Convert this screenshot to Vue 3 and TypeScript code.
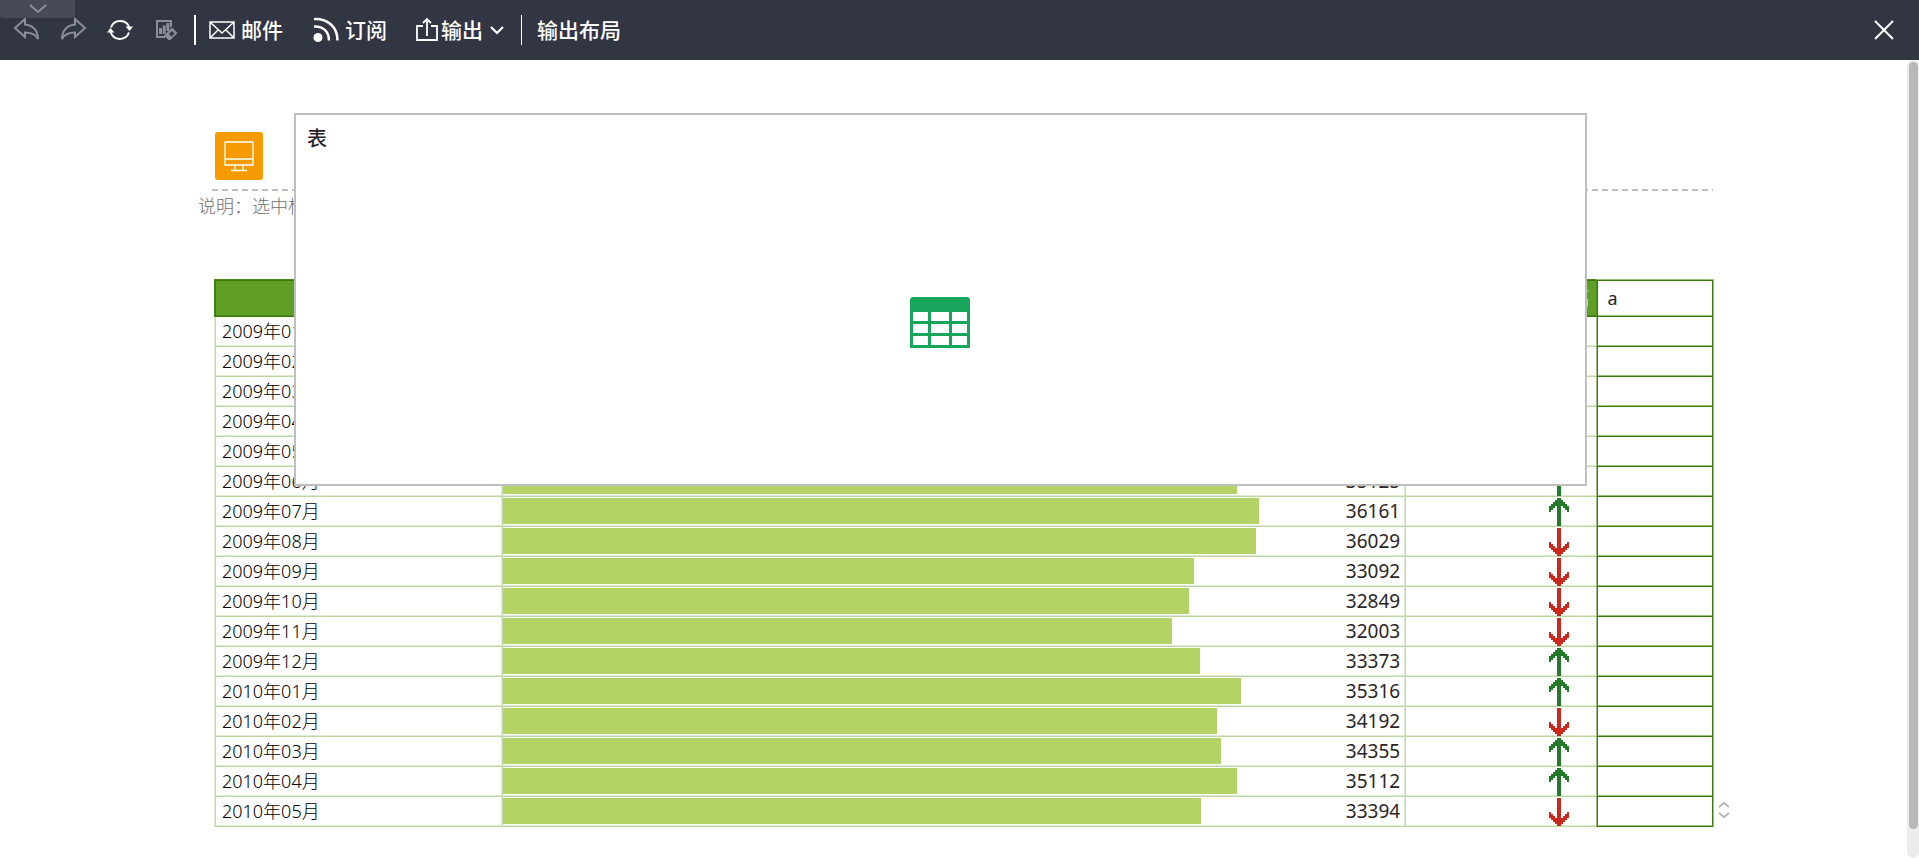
<script setup lang="ts">
interface Row {
  month: string
  value: number | null
  trend: 'up' | 'down' | null
}

const AXIS_MAX = 43130

const rows: Row[] = [
  { month: '2009年01月', value: null, trend: null },
  { month: '2009年02月', value: null, trend: null },
  { month: '2009年03月', value: null, trend: null },
  { month: '2009年04月', value: null, trend: null },
  { month: '2009年05月', value: null, trend: null },
  { month: '2009年06月', value: 35125, trend: 'up' },
  { month: '2009年07月', value: 36161, trend: 'up' },
  { month: '2009年08月', value: 36029, trend: 'down' },
  { month: '2009年09月', value: 33092, trend: 'down' },
  { month: '2009年10月', value: 32849, trend: 'down' },
  { month: '2009年11月', value: 32003, trend: 'down' },
  { month: '2009年12月', value: 33373, trend: 'up' },
  { month: '2010年01月', value: 35316, trend: 'up' },
  { month: '2010年02月', value: 34192, trend: 'down' },
  { month: '2010年03月', value: 34355, trend: 'up' },
  { month: '2010年04月', value: 35112, trend: 'up' },
  { month: '2010年05月', value: 33394, trend: 'down' },
]

const barWidth = (value: number): string => `${(value / AXIS_MAX) * 100}%`
</script>

<template>
  <div class="app">
    <header class="toolbar">
      <button class="fold" type="button" aria-label="收起">
        <svg width="18" height="10" viewBox="0 0 18 10"><path d="M1 1l8 7 8-7" fill="none" stroke="#8d8f98" stroke-width="2" /></svg>
      </button>
      <div class="tools">
        <button class="tool dim" type="button" aria-label="撤销">
          <svg width="28" height="28" viewBox="0 0 28 28"><path d="M2 12L12 3v5.500C20 9 25 15 25 23c-2-4-6-6.500-13-6.500V21z" /></svg>
        </button>
        <button class="tool dim" type="button" aria-label="重做">
          <svg width="28" height="28" viewBox="0 0 28 28"><path d="M25 12L15 3v5.500C7 9 2 15 2 23c2-4 6-6.500 13-6.500V21z" /></svg>
        </button>
        <button class="tool" type="button" aria-label="刷新">
          <svg width="28" height="28" viewBox="0 0 28 28">
            <path d="M4 11.500A9.700 9.700 0 0 1 22.500 12M22 16.500A9.700 9.700 0 0 1 3.600 16" />
            <path class="solid" d="M18.500 10.500H26l-3.400 4.500zM0 16.500l3.400-4.500L7.500 16.500z" />
          </svg>
        </button>
        <button class="tool dim" type="button" aria-label="编辑报表">
          <svg width="28" height="28" viewBox="0 0 28 28">
            <path d="M11 21H3V5h14v6" />
            <path class="solid" d="M5 12h3v6H5zM8.700 9.500h3V18h-3zM12.400 7h3v8h-3z" />
            <path class="solid" fill-rule="evenodd" d="M18 11.500l5.500 5.500-7 7h-2l-4.500-4.500zM18 15l-3 3 2.500 2.500 3-3z" />
          </svg>
        </button>
      </div>
      <span class="divider thick"></span>
      <button class="command" type="button">
        <svg width="26" height="28" viewBox="0 0 26 28"><path d="M1 6h24v16H1zM1.500 6.500L13 17 24.500 6.500M1.500 21.500l8-8M24.500 21.500l-8-8" stroke-width="1.500" /></svg>
        <span class="label">邮件</span>
      </button>
      <button class="command" type="button">
        <svg width="26" height="28" viewBox="0 0 26 28">
          <circle class="solid" cx="5" cy="21.500" r="4.500" />
          <path d="M1 10.500c9-.500 15 5 15 14M1 3c14-.500 23.500 8 23.500 21.500" stroke-width="2.500" />
        </svg>
        <span class="label">订阅</span>
      </button>
      <button class="command export" type="button">
        <svg width="22" height="28" viewBox="0 0 22 28"><path d="M7 10H1v14h20V10h-6M11 20V3M7 7l4-4 4 4" stroke-width="1.800" /></svg>
        <span class="label">输出</span>
        <svg class="caret" width="14" height="10" viewBox="0 0 14 10"><path d="M1 2l6 6 6-6" stroke-width="2.200" /></svg>
      </button>
      <span class="divider"></span>
      <button class="command" type="button"><span class="label">输出布局</span></button>
      <button class="close" type="button" aria-label="关闭">
        <svg width="22" height="22" viewBox="0 0 22 22"><path d="M2 2l18 18M20 2L2 20" stroke-width="2" /></svg>
      </button>
    </header>

    <main class="viewport">
      <div class="canvas">
        <div class="badge">
          <svg width="48" height="48" viewBox="0 0 48 48"><path d="M10 10h28v23H10zM10 27h28M20 33v5M28 33v5M16 38.500h16" fill="none" stroke="#fff" stroke-width="1.300" stroke-linejoin="round" /></svg>
        </div>
        <div class="rule"></div>
        <p class="note">说明：选中标</p>

        <div class="grid">
          <table>
            <colgroup>
              <col class="c-month" /><col class="c-bar" /><col class="c-trend" /><col class="c-extra" />
            </colgroup>
            <thead>
              <tr><th></th><th></th><th class="rate">增幅</th><th class="extra">a</th></tr>
            </thead>
            <tbody>
              <tr v-for="row in rows" :key="row.month">
                <td class="month">{{ row.month }}</td>
                <td class="measure">
                  <div v-if="row.value !== null" class="track">
                    <div class="bar" :style="{ width: barWidth(row.value) }"></div>
                    <span class="number">{{ row.value }}</span>
                  </div>
                </td>
                <td class="trend">
                  <svg v-if="row.trend" :class="row.trend" width="20" height="28" viewBox="0 0 10 14" shape-rendering="crispEdges">
                    <path d="M4 0h2v1h1v1h1v1h1v1h1v3H9V6H8V5H7V4H6v10H4V4H3v1H2v1H1v1H0V4h1V3h1V2h1V1h1z" />
                  </svg>
                </td>
                <td class="extra"></td>
              </tr>
            </tbody>
          </table>
          <div class="stepper">
            <svg width="12" height="18" viewBox="0 0 12 18"><path d="M1 6l5-4 5 4M1 12l5 4 5-4" fill="none" stroke="#b5b5b5" stroke-width="1.800" /></svg>
          </div>
        </div>

        <section class="panel">
          <h2>表</h2>
          <svg class="sheet" width="60" height="51" viewBox="0 0 60 51">
            <path fill="#16a55b" fill-rule="evenodd" d="M2 0h56l2 2v49H0V2zM3 15v9h15v-9zM21 15v9h18v-9zM42 15v9h15v-9zM3 27v9h15v-9zM21 27v9h18v-9zM42 27v9h15v-9zM3 39v9h15v-9zM21 39v9h18v-9zM42 39v9h15v-9z" />
          </svg>
        </section>
      </div>
      <div class="scrollbar"><div class="thumb"></div></div>
    </main>
  </div>
</template>

<style>
body {
  margin: 0;
  overflow: hidden;
}
</style>

<style scoped>
.app {
  display: flex;
  flex-direction: column;
  height: 100vh;
  background: #fff;
  color: #2b2526;
  font-family: "Noto Sans", "Noto Sans CJK SC", sans-serif;
}
button {
  padding: 0;
  border: 0;
  background: none;
  color: inherit;
  font: inherit;
}
svg {
  display: block;
}
.toolbar {
  position: relative;
  display: flex;
  align-items: center;
  flex: none;
  height: 60px;
  box-sizing: border-box;
  padding: 0 24px 0 13px;
  background: #323542;
  color: #fff;
  font-size: 21px;
  line-height: 28px;
  font-weight: 500;
  font-family: "Noto Sans CJK SC", sans-serif;
}
.toolbar svg {
  fill: none;
  stroke: currentColor;
  stroke-width: 2;
}
.toolbar .solid {
  fill: currentColor;
  stroke: none;
}
.fold {
  position: absolute;
  left: 0;
  top: 0;
  display: flex;
  justify-content: center;
  align-items: center;
  width: 75px;
  height: 18px;
  border-radius: 0 0 3px 3px;
  background: #484a57;
}
.tools {
  display: flex;
  gap: 19px;
}
.dim {
  color: #8b8d97;
}
.divider {
  width: 1px;
  height: 30px;
  margin: 0 15px 0 17px;
  background: #fff;
}
.divider.thick {
  width: 2px;
  margin: 0 13px 0 12px;
}
.command {
  display: flex;
  align-items: center;
  gap: 6px;
}
.label {
  padding-bottom: 3px;
}
.command + .command {
  margin-left: 30px;
}
.command + .export {
  margin-left: 29px;
}
.export {
  gap: 3px;
}
.caret {
  margin-left: 4px;
}
.close {
  margin-left: auto;
}
.viewport {
  display: flex;
  flex: 1;
  min-height: 0;
}
.canvas {
  position: relative;
  flex: 1;
  padding: 72px 194px 0 212px;
}
.badge {
  width: 48px;
  height: 48px;
  margin-left: 3px;
  border-radius: 3px;
  background: #f59a00;
}
.rule {
  height: 2px;
  margin-top: 9px;
  background: repeating-linear-gradient(90deg, #bfbfbf 0 6px, transparent 6px 10px);
}
.note {
  margin: 2px 0 0 -14px;
  color: #707070;
  font-size: 18px;
  line-height: 26px;
  font-weight: 300;
}
.grid {
  position: relative;
  margin: 60px -1px 0 2px;
}
table {
  width: 100%;
  table-layout: fixed;
  border-collapse: separate;
  border-spacing: 0;
  border-right: 1px solid #9dc181;
}
.c-month { width: 19.150%; }
.c-bar { width: 60.250%; }
.c-trend { width: 12.770%; }
th,
td {
  box-sizing: border-box;
  height: 30px;
  padding: 1px 0 2px 1px;
  border-left: 1px solid #dceccf;
  border-bottom: 1px solid #bdd7a3;
  box-shadow: inset 1px 0 #c3dbac, inset 0 -1px #dceccf;
  font-size: 18px;
  line-height: 26px;
  font-weight: 400;
  text-align: left;
}
th {
  height: 38px;
  border-top: 1px solid #4b8a1c;
  border-left-color: #4b8a1c;
  border-bottom-color: #3b7a08;
  background: #609f26;
  box-shadow: inset 1px 1px #3b7a08, inset 0 -1px #4b8a1c;
}
th.rate {
  padding-right: 7px;
  color: #fff;
  text-align: right;
}
td.month {
  padding-left: 7px;
  color: #000;
  font-weight: 300;
}
td.extra,
th.extra {
  border-left-color: #9dc181;
  border-bottom-color: #3b7a08;
  background: #fff;
  box-shadow: inset 1px 0 #3b7a08, inset -1px 0 #3b7a08, inset 0 -1px #9dc181;
}
th.extra {
  padding-left: 11px;
  border-top-color: #9dc181;
  border-left-color: #4b8a1c;
  box-shadow: inset 1px 1px #3b7a08, inset -1px 0 #3b7a08, inset 0 -1px #9dc181;
}
.track {
  display: flex;
  position: relative;
  justify-content: flex-end;
  height: 26px;
}
.bar {
  position: absolute;
  left: 0;
  top: 0;
  height: 100%;
  background: #b3d365;
}
.number {
  position: relative;
  padding-right: 4px;
  font-size: 19px;
}
td.trend {
  padding: 0 27px 0 2px;
}
.trend svg {
  margin-left: auto;
}
.up {
  fill: #237a28;
}
.down {
  fill: #cc281e;
  transform: rotate(180deg);
}
.stepper {
  position: absolute;
  right: -16px;
  bottom: 8px;
}
.panel {
  position: absolute;
  top: 53px;
  left: 294px;
  right: 320px;
  height: 373px;
  box-sizing: border-box;
  padding: 10px 12px 10px 11px;
  border: 2px solid #bfbfbf;
  background: #fff;
}
.panel h2 {
  margin: 0;
  font-size: 20px;
  line-height: 28px;
  font-weight: 500;
}
.sheet {
  margin: 144px auto 0;
}
.scrollbar {
  width: 12px;
  box-sizing: border-box;
  padding: 2px 1px 29px 2px;
  border-radius: 6px;
  background: #ececec;
}
.thumb {
  height: 100%;
  border-radius: 5px;
  background: #b8b8b8;
}
</style>
